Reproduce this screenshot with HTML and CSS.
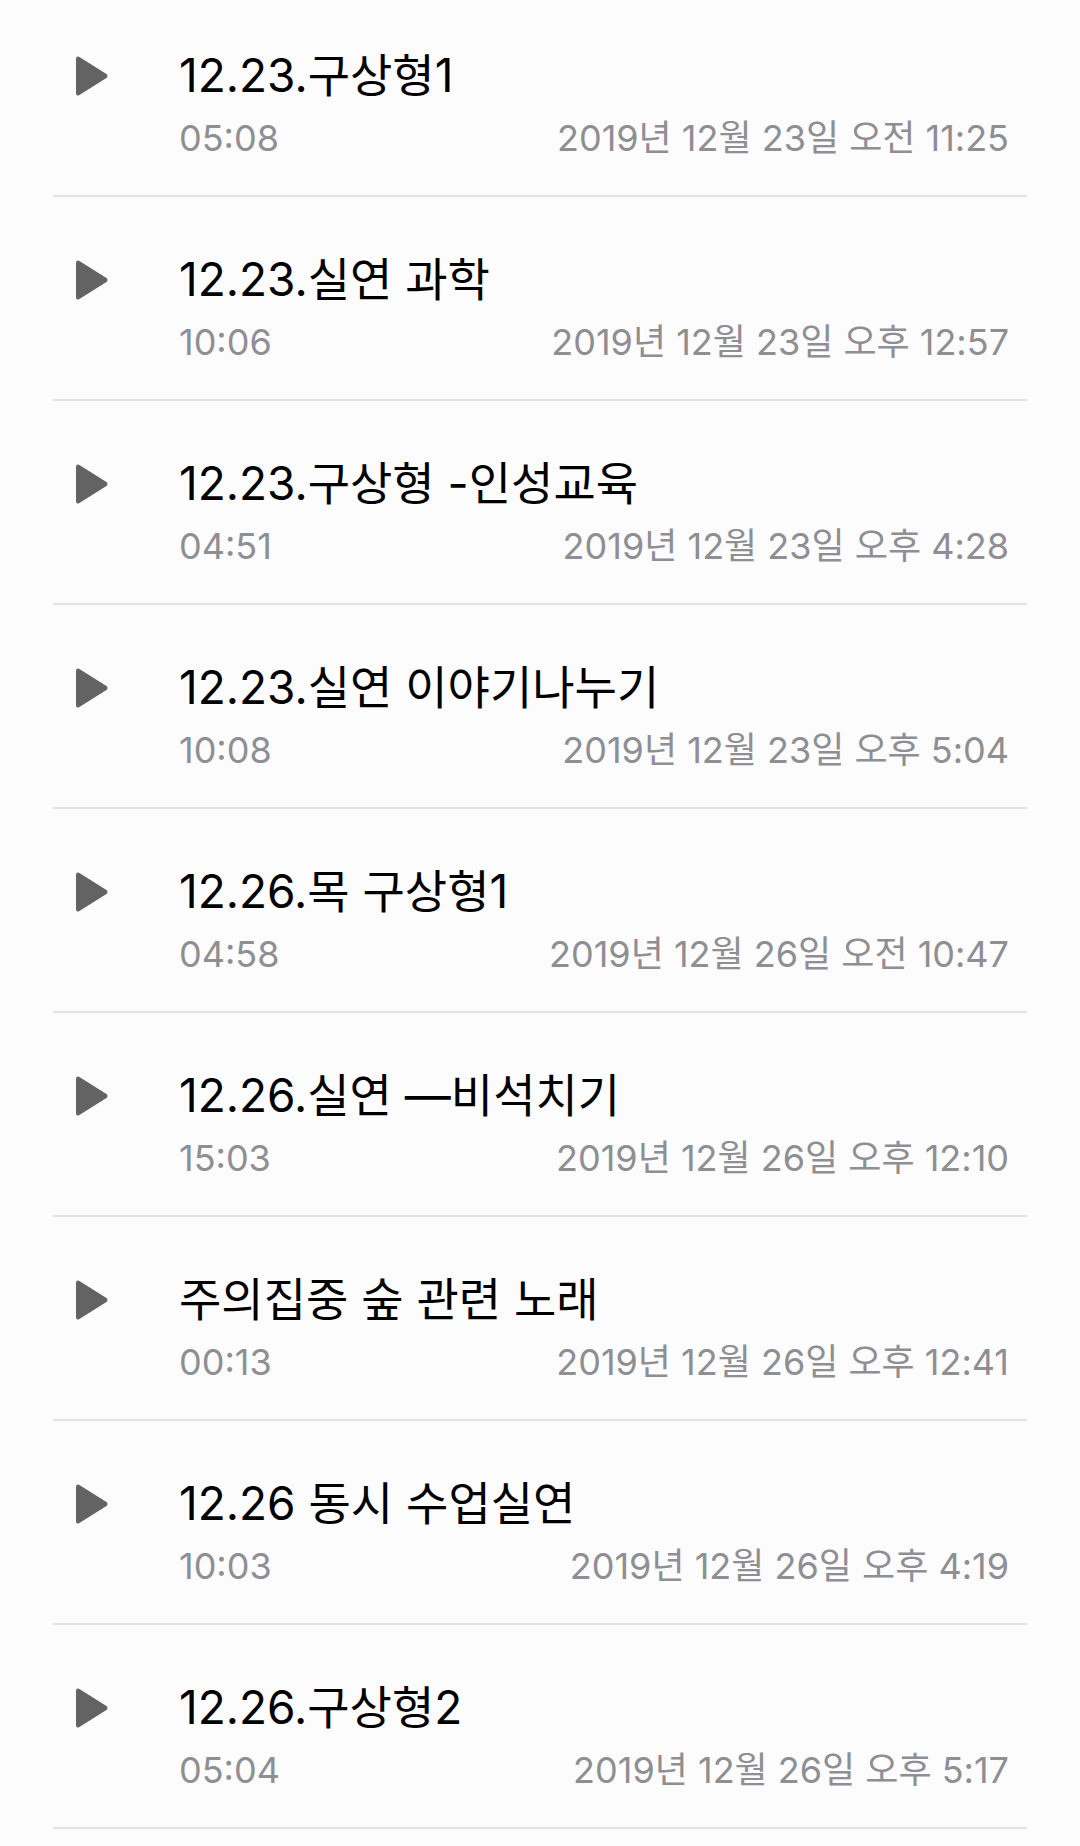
FILE: index.html
```html
<!DOCTYPE html>
<html lang="ko">
<head>
    <meta charset="UTF-8">
    <meta name="viewport" content="width=device-width, initial-scale=1.0">
    <title>음성 메모</title>
    <link rel="stylesheet" href="styles.css">
</head>
<body>

<div class="list">
    <div class="row">
        <svg class="play" viewBox="0 0 32 40"><path d="M3 0.8 Q0 -0.6 0 3 V37 Q0 40.6 3 39.2 L30.5 22 Q32.5 20 30.5 18 Z"/></svg>
        <div class="info">
            <div class="title">12.23.구상형1</div>
            <div class="meta"><span>05:08</span><span>2019년 12월 23일 오전 11:25</span></div>
        </div>
    </div>
    <div class="row">
        <svg class="play" viewBox="0 0 32 40"><path d="M3 0.8 Q0 -0.6 0 3 V37 Q0 40.6 3 39.2 L30.5 22 Q32.5 20 30.5 18 Z"/></svg>
        <div class="info">
            <div class="title">12.23.실연 과학</div>
            <div class="meta"><span>10:06</span><span>2019년 12월 23일 오후 12:57</span></div>
        </div>
    </div>
    <div class="row">
        <svg class="play" viewBox="0 0 32 40"><path d="M3 0.8 Q0 -0.6 0 3 V37 Q0 40.6 3 39.2 L30.5 22 Q32.5 20 30.5 18 Z"/></svg>
        <div class="info">
            <div class="title">12.23.구상형 -인성교육</div>
            <div class="meta"><span>04:51</span><span>2019년 12월 23일 오후 4:28</span></div>
        </div>
    </div>
    <div class="row">
        <svg class="play" viewBox="0 0 32 40"><path d="M3 0.8 Q0 -0.6 0 3 V37 Q0 40.6 3 39.2 L30.5 22 Q32.5 20 30.5 18 Z"/></svg>
        <div class="info">
            <div class="title">12.23.실연 이야기나누기</div>
            <div class="meta"><span>10:08</span><span>2019년 12월 23일 오후 5:04</span></div>
        </div>
    </div>
    <div class="row">
        <svg class="play" viewBox="0 0 32 40"><path d="M3 0.8 Q0 -0.6 0 3 V37 Q0 40.6 3 39.2 L30.5 22 Q32.5 20 30.5 18 Z"/></svg>
        <div class="info">
            <div class="title">12.26.목 구상형1</div>
            <div class="meta"><span>04:58</span><span>2019년 12월 26일 오전 10:47</span></div>
        </div>
    </div>
    <div class="row">
        <svg class="play" viewBox="0 0 32 40"><path d="M3 0.8 Q0 -0.6 0 3 V37 Q0 40.6 3 39.2 L30.5 22 Q32.5 20 30.5 18 Z"/></svg>
        <div class="info">
            <div class="title">12.26.실연 —비석치기</div>
            <div class="meta"><span>15:03</span><span>2019년 12월 26일 오후 12:10</span></div>
        </div>
    </div>
    <div class="row">
        <svg class="play" viewBox="0 0 32 40"><path d="M3 0.8 Q0 -0.6 0 3 V37 Q0 40.6 3 39.2 L30.5 22 Q32.5 20 30.5 18 Z"/></svg>
        <div class="info">
            <div class="title">주의집중 숲 관련 노래</div>
            <div class="meta"><span>00:13</span><span>2019년 12월 26일 오후 12:41</span></div>
        </div>
    </div>
    <div class="row">
        <svg class="play" viewBox="0 0 32 40"><path d="M3 0.8 Q0 -0.6 0 3 V37 Q0 40.6 3 39.2 L30.5 22 Q32.5 20 30.5 18 Z"/></svg>
        <div class="info">
            <div class="title">12.26 동시 수업실연</div>
            <div class="meta"><span>10:03</span><span>2019년 12월 26일 오후 4:19</span></div>
        </div>
    </div>
    <div class="row">
        <svg class="play" viewBox="0 0 32 40"><path d="M3 0.8 Q0 -0.6 0 3 V37 Q0 40.6 3 39.2 L30.5 22 Q32.5 20 30.5 18 Z"/></svg>
        <div class="info">
            <div class="title">12.26.구상형2</div>
            <div class="meta"><span>05:04</span><span>2019년 12월 26일 오후 5:17</span></div>
        </div>
    </div>
</div>

</body>
</html>
```

FILE: styles.css
```css
body {
    font-family: Inter, "Noto Sans CJK KR", sans-serif;
    margin: 0;
    padding: 0;
    background-color: #fcfcfd;
    overflow: hidden;
}
.list {
    margin: -7px 53px 0 53px;
}
.row {
    display: flex;
    align-items: flex-start;
    height: 148px;
    padding: 54px 18px 0 23px;
    border-bottom: 2px solid #e3e3e5;
}
.play {
    width: 32px;
    height: 40px;
    margin-top: 9px;
    fill: #636363;
    flex-shrink: 0;
}
.info {
    flex: 1;
    margin-left: 71px;
}
.title {
    font-size: 46px;
    line-height: 56px;
    color: #000;
    white-space: nowrap;
}
.meta {
    display: flex;
    justify-content: space-between;
    margin-top: 13px;
    font-size: 36px;
    line-height: 44px;
    color: #8e8e93;
}
```
